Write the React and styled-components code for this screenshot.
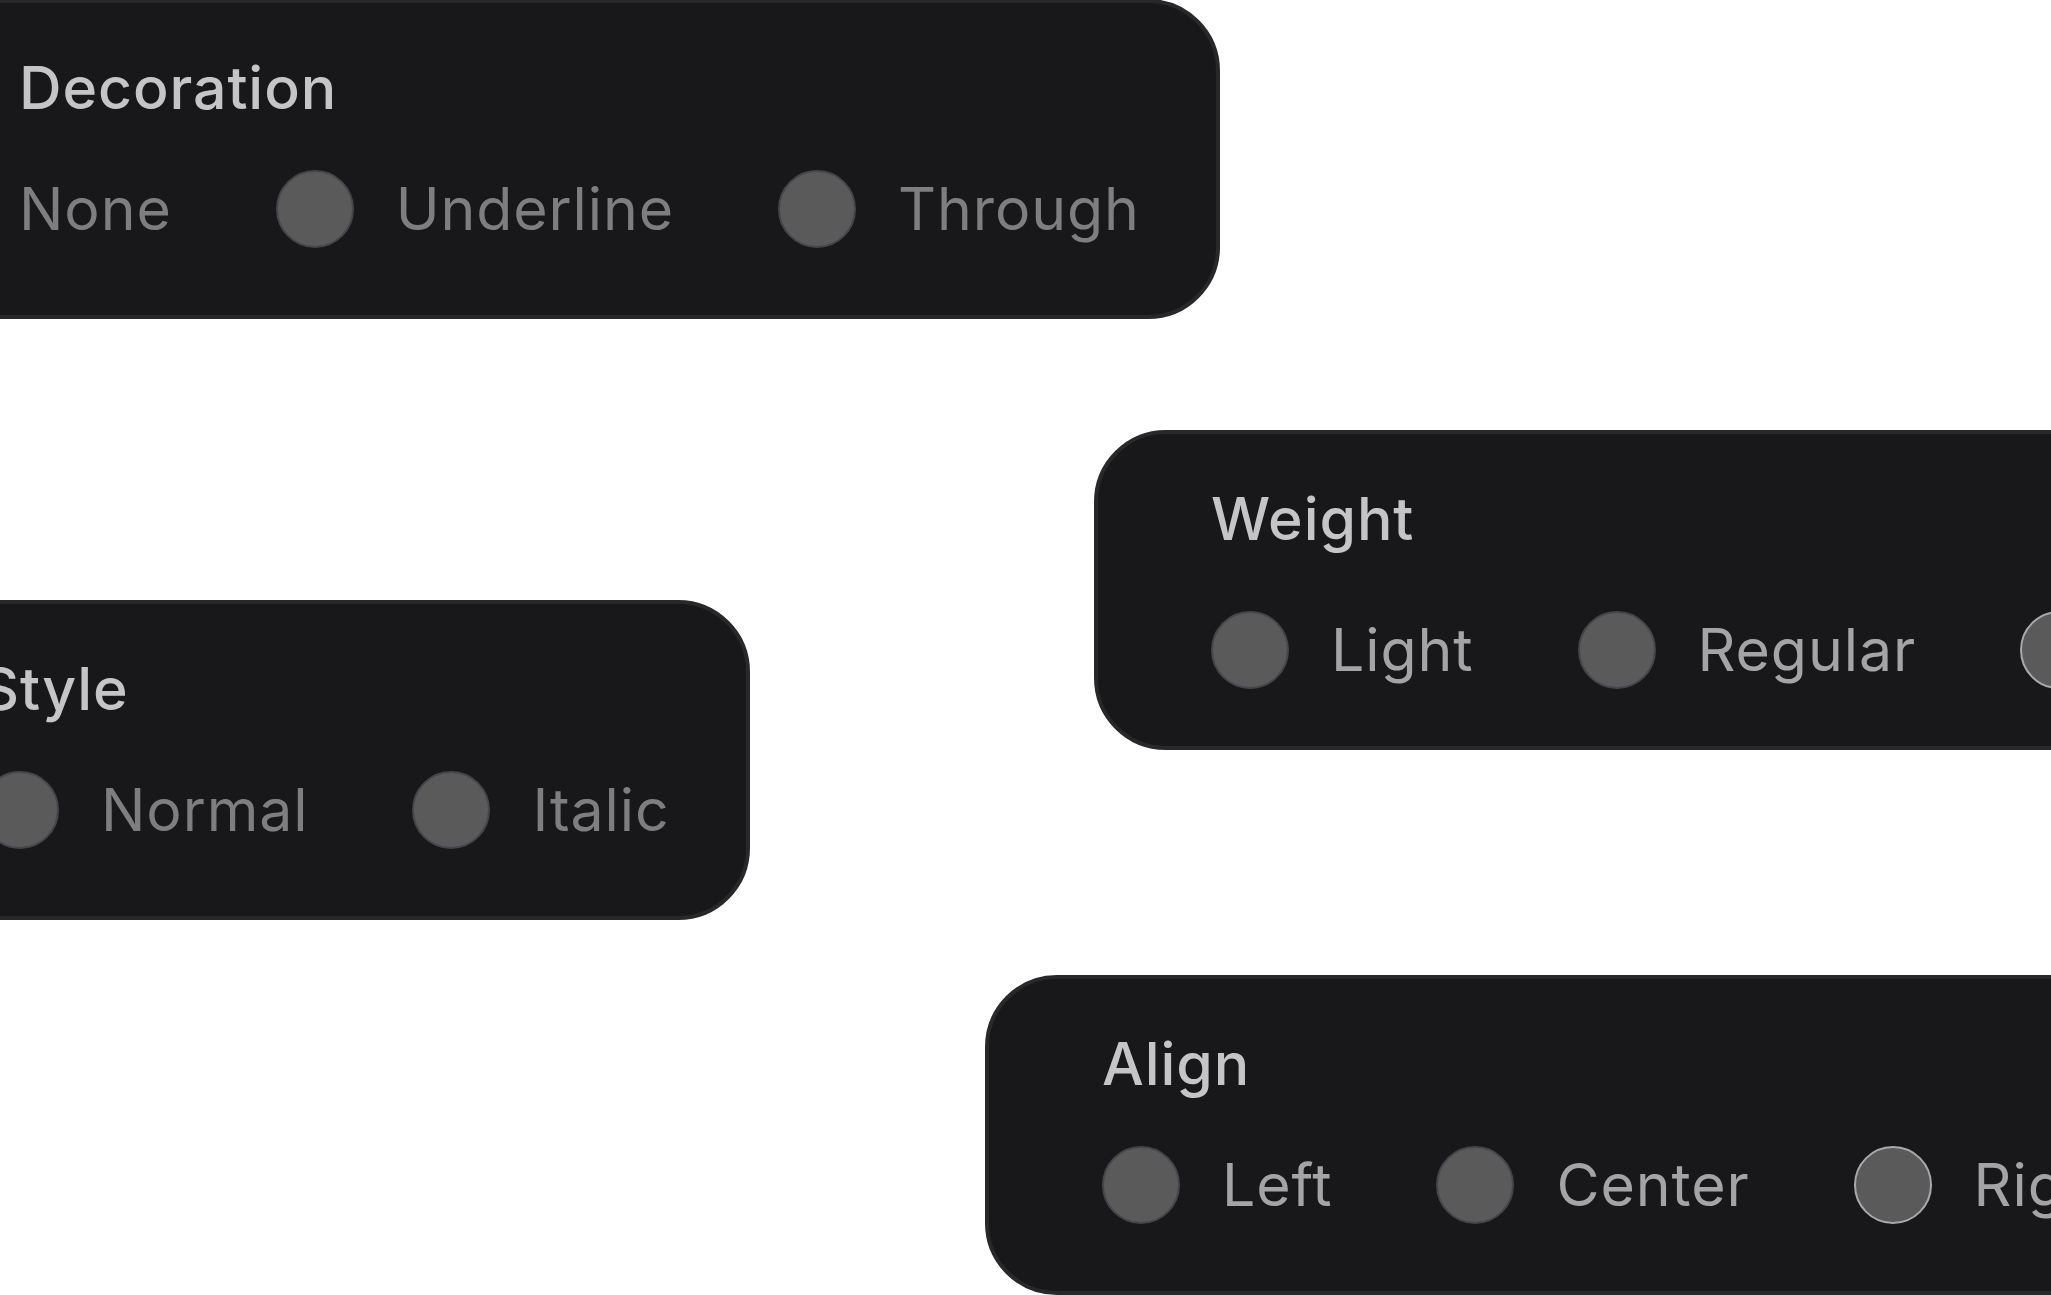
import React from "react";
import styled, { createGlobalStyle } from "styled-components";

const Global = createGlobalStyle`
  html, body { margin: 0; padding: 0; background: #ffffff; }
  body { font-family: Inter, "Noto Sans", sans-serif; }
`;

const Canvas = styled.div`
  position: relative;
  width: 100vw;
  height: 100vh;
  overflow: hidden;
  background: #ffffff;
`;

const Card = styled.section`
  position: absolute;
  left: ${(p) => p.$x}px;
  top: ${(p) => p.$y}px;
  box-sizing: border-box;
  height: 320px;
  display: flex;
  flex-direction: column;
  padding: 56px 76px 0 113px;
  background: #18181b;
  border: 4px solid #28282b;
  border-radius: 72px;
  white-space: nowrap;
`;

const Title = styled.h3`
  margin: 0;
  font-family: Inter, "Noto Sans", sans-serif;
  font-size: 59px;
  line-height: 58px;
  font-weight: 500;
  letter-spacing: 0.9px;
  color: #c5c5c8;
`;

const Options = styled.div`
  display: flex;
  align-items: center;
  gap: 104px;
  margin-top: ${(p) => (p.$low ? 63 : 53)}px;
`;

const Option = styled.label`
  display: flex;
  align-items: center;
  gap: 42px;
`;

const Radio = styled.span`
  box-sizing: border-box;
  display: block;
  width: 78px;
  height: 78px;
  flex: none;
  border-radius: 50%;
  background: #5a5a5b;
  border: 2px solid ${(p) => (p.$focus ? "#a9a9ab" : "#46464a")};
`;

const OptionText = styled.span`
  font-family: Inter, "Noto Sans", sans-serif;
  font-size: 59px;
  line-height: 58px;
  font-weight: 400;
  letter-spacing: 0.9px;
  color: ${(p) => (p.$muted ? "#7e7e81" : "#a4a4a7")};
`;

const groups = [
  {
    title: "Decoration",
    x: -98,
    y: -1,
    muted: true,
    options: [
      { label: "None", noRadio: true },
      { label: "Underline" },
      { label: "Through" },
    ],
  },
  {
    title: "Weight",
    x: 1094,
    y: 430,
    low: true,
    options: [{ label: "Light" }, { label: "Regular" }, { label: "Bold", focus: true }],
  },
  {
    title: "Style",
    x: -136,
    y: 600,
    muted: true,
    options: [{ label: "Normal" }, { label: "Italic" }],
  },
  {
    title: "Align",
    x: 985,
    y: 975,
    options: [{ label: "Left" }, { label: "Center" }, { label: "Right", focus: true }],
  },
];

export default function App() {
  return (
    <>
      <Global />
      <Canvas>
        {groups.map((g) => (
          <Card key={g.title} $x={g.x} $y={g.y}>
            <Title>{g.title}</Title>
            <Options $low={g.low}>
              {g.options.map((o) => (
                <Option key={o.label}>
                  {!o.noRadio && <Radio $focus={o.focus} />}
                  <OptionText $muted={g.muted}>{o.label}</OptionText>
                </Option>
              ))}
            </Options>
          </Card>
        ))}
      </Canvas>
    </>
  );
}
